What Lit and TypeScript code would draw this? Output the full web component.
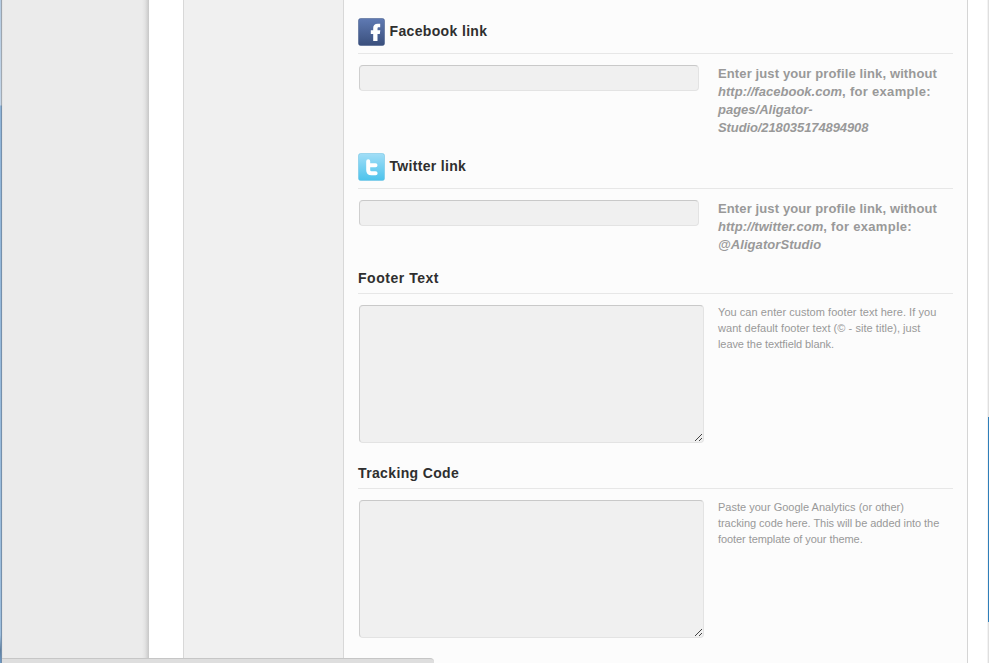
import { LitElement, html, css, svg } from "lit";
import { customElement, property } from "lit/decorators.js";

type Line = { text: unknown; track?: number };

@customElement("option-icon")
class OptionIcon extends LitElement {
  @property() name = "";
  static styles = css`
    :host { display: block; width: 27px; height: 28px; }
    svg { display: block; }
  `;
  render() {
    const fb = this.name === "facebook";
    const glyph = fb
      ? svg`<path d="M22.200 5.800H19.800c-3.300 0-4.600 1.700-4.600 4.500V12.200H12.800v3.700h2.400V23h4.300V15.900h2.300l.5-3.700h-2.800V10.700c0-1.100.4-1.400 1.300-1.400h1.400z" fill="#fff"/>`
      : svg`<path d="M10.200 8.300v8.700c0 2.300 1.100 3.300 3.300 3.300h4.100M10.200 12.300h7.300" fill="none" stroke="#fff" stroke-width="4" stroke-linecap="round" stroke-linejoin="round"/>`;
    return html`<svg width="27" height="28" viewBox="0 0 27 28">
      <defs>
        <linearGradient id="g" x1="0" y1="0" x2="0" y2="1">
          <stop offset="0" stop-color=${fb ? "#5f7ab3" : "#a2def7"} />
          <stop offset="1" stop-color=${fb ? "#3a4f7c" : "#4cc3ec"} />
        </linearGradient>
      </defs>
      <rect x=".5" y=".5" width="26" height="27" rx="2" fill="url(#g)"
        stroke=${fb ? "#3c5384" : "#68bfe2"} stroke-opacity=".5" />
      ${glyph}
    </svg>`;
  }
}

@customElement("option-section")
class OptionSection extends LitElement {
  @property() heading = "";
  @property() icon = "";
  @property({ type: Number }) track = 0;
  @property({ attribute: false }) lines: Line[] = [];
  static styles = css`
    :host { display: block; box-sizing: border-box; }
    .head {
      display: flex; align-items: flex-start; box-sizing: border-box; width: 595px; height: 36px;
      padding-top: 11px; border-bottom: 1px solid #e7e7e7;
      font-size: 14px; line-height: 18px; font-weight: bold; color: #2f2f2f;
    }
    .head.with-icon { height: 54px; padding-top: 18px; gap: 4.5px; }
    .with-icon .title { padding-top: 4px; }
    .title { white-space: nowrap; }
    .body { display: flex; padding: 11px 0 0 1px; align-items: flex-start; }
    .control { width: 359px; flex: none; }
    input, textarea {
      display: block; box-sizing: border-box; margin: 0; padding: 4px; outline: none;
      background: #f0f0f0; border: 1px solid; border-color: #c9c9c9 #e3e3e3 #e3e3e3 #cfcfcf;
      border-radius: 4px; font: 12px "Liberation Sans", Arial, sans-serif; color: #555;
    }
    input { width: 340px; height: 26px; }
    .area { position: relative; width: 345px; }
    textarea { width: 345px; height: 138px; resize: none; }
    .grip { position: absolute; right: 1px; bottom: 1px; display: block; }
    .help { font-size: 11px; line-height: 16px; color: #999; margin-top: -1px; white-space: nowrap; }
    .help.strong { font-size: 13px; line-height: 18px; font-weight: bold; margin-top: 0; }
    .wide { letter-spacing: 0.28px; }
  `;
  render() {
    const social = !!this.icon;
    return html`
      <div class="head ${social ? "with-icon" : ""}">
        ${social ? html`<option-icon name=${this.icon}></option-icon>` : ""}
        <span class="title" style="letter-spacing:${this.track}px">${this.heading}</span>
      </div>
      <div class="body">
        <div class="control">
          ${social
            ? html`<input type="text" />`
            : html`<div class="area"><textarea></textarea>
                <svg class="grip" width="8" height="8" viewBox="0 0 8 8" shape-rendering="crispEdges" fill="#444">
                  ${[0, 1, 2, 3, 4, 5, 6].map((i) => svg`<rect x=${i} y=${6 - i} width="1" height="1"/>`)}
                  ${[4, 5, 6].map((i) => svg`<rect x=${i} y=${10 - i} width="1" height="1"/>`)}
                </svg></div>`}
        </div>
        <div class="help ${social ? "strong" : ""}">
          ${this.lines.map((l) => html`<div style="letter-spacing:${l.track ?? 0}px">${l.text}</div>`)}
        </div>
      </div>`;
  }
}

@customElement("app-root")
class AppRoot extends LitElement {
  static styles = css`
    :host {
      display: flex; position: relative; width: 989px; height: 663px; overflow: hidden;
      background: #fff; font-family: "Liberation Sans", Arial, sans-serif;
    }
    .edge {
      width: 1px; flex: none;
      background: linear-gradient(#b4cbe2 0, #c3d5e8 105px, #8fb4d8 106px, #9dbedd 635px, #5f7f9f 650px, #6d9ac8 663px);
    }
    .edge-line { width: 1px; flex: none; background: linear-gradient(#9aa3ad 0, #a3abb4 105px, #7590ac 106px, #7590ac 663px); }
    .menu { width: 147px; flex: none; background: linear-gradient(to right, #dedede 0, #ebebeb 1px, #ebebeb 140px, #e3e3e3 143px, #c7c7c7 147px); }
    .gutter { width: 34px; flex: none; background: #fff; }
    .tabs { width: 159px; flex: none; background: #f0f0f0; border-left: 1px solid #d8d8d8; }
    .panel {
      width: 623px; flex: none; box-sizing: content-box; background: #fcfcfc;
      border-left: 1px solid #d8d8d8; border-right: 1px solid #d5d5d5;
    }
    option-section { margin-left: 14px; }
    .facebook { height: 135px; }
    .twitter { height: 123px; }
    .text { height: 195px; }
    .scroll { margin-left: auto; width: 2px; flex: none; display: flex; flex-direction: column; background: linear-gradient(to right, #f3f3f3 50%, #dfdfdf 50%); }
    .thumb { margin: 417px 0 0 1px; height: 205px; width: 1px; background: #2f7fba; }
    .status {
      position: absolute; left: 2px; bottom: 0; width: 432px; height: 5px; box-sizing: border-box;
      background: #dedede; border-top: 1px solid #c6c6c6; border-radius: 0 4px 0 0;
    }
  `;
  render() {
    const wide = (t: string) => html`<span style="letter-spacing:0.3px">${t}</span>`;
    const fb: Line[] = [
      { text: "Enter just your profile link, without", track: 0.12 },
      { text: html`<i>http://facebook.com</i>${wide(", for example:")}`, track: 0.03 },
      { text: html`<i>pages/Aligator-</i>` },
      { text: html`<i>Studio/218035174894908</i>`, track: -0.1 },
    ];
    const tw: Line[] = [
      { text: "Enter just your profile link, without", track: 0.12 },
      { text: html`<i>http://twitter.com</i>${wide(", for example:")}`, track: 0.03 },
      { text: html`<i>@AligatorStudio</i>`, track: 0.07 },
    ];
    const footer: Line[] = [
      { text: "You can enter custom footer text here. If you", track: 0.05 },
      { text: "want default footer text (© - site title), just", track: 0.05 },
      { text: "leave the textfield blank.", track: -0.08 },
    ];
    const tracking: Line[] = [
      { text: "Paste your Google Analytics (or other)" },
      { text: "tracking code here. This will be added into the", track: -0.05 },
      { text: "footer template of your theme.", track: -0.07 },
    ];
    return html`
      <div class="edge"></div>
      <div class="edge-line"></div>
      <div class="menu"></div>
      <div class="gutter"></div>
      <div class="tabs"></div>
      <div class="panel">
        <option-section class="facebook" icon="facebook" heading="Facebook link" track="0.35" .lines=${fb}></option-section>
        <option-section class="twitter" icon="twitter" heading="Twitter link" track="0.32" .lines=${tw}></option-section>
        <option-section class="text" heading="Footer Text" track="0.53" .lines=${footer}></option-section>
        <option-section class="text" heading="Tracking Code" track="0.36" .lines=${tracking}></option-section>
      </div>
      <div class="scroll"><div class="thumb"></div></div>
      <div class="status"></div>
    `;
  }
}
